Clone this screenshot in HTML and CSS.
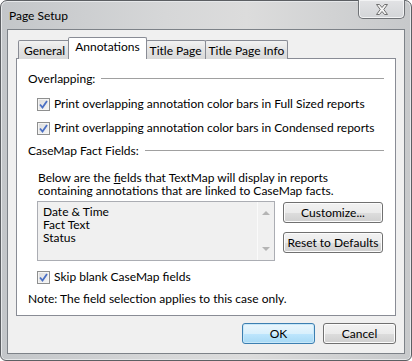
FILE: index.html
```html
<!DOCTYPE html>
<html lang="en">
<head>
  <meta charset="UTF-8" />
  <title>Page Setup</title>
  <link rel="stylesheet" href="styles.css">
</head>
<body>

  <div class="window">
    <div class="titlebar">
      <span class="title">Page Setup</span>
      <button class="close-btn" aria-label="Close">
        <svg width="14" height="11" viewBox="0 0 14 11">
          <path d="M1.5 0.5 H4.5 L7 3.5 L9.5 0.5 H12.5 L8.8 5.5 L12.5 10.5 H9.5 L7 7.5 L4.5 10.5 H1.5 L5.2 5.5 Z"
                fill="#f4f4f4" stroke="#707070" stroke-width="1" stroke-linejoin="round"/>
        </svg>
      </button>
    </div>

    <div class="client">
      <div class="tabs">
        <div class="tab">General</div>
        <div class="tab active">Annotations</div>
        <div class="tab">Title Page</div>
        <div class="tab">Title Page Info</div>
      </div>

      <div class="panel">
        <div class="group-head"><span>Overlapping:</span></div>

        <label class="check row-cb1">
          <span class="box"><svg width="9" height="9" viewBox="0 0 9 9"><path d="M1 4.5 L3.5 7.5 L8 1" fill="none" stroke="#4a6fc4" stroke-width="1.8"/></svg></span>
          Print overlapping annotation color bars in Full Sized reports
        </label>
        <label class="check row-cb2">
          <span class="box"><svg width="9" height="9" viewBox="0 0 9 9"><path d="M1 4.5 L3.5 7.5 L8 1" fill="none" stroke="#4a6fc4" stroke-width="1.8"/></svg></span>
          Print overlapping annotation color bars in Condensed reports
        </label>

        <div class="group-head row-head2"><span>CaseMap Fact Fields:</span></div>

        <p class="desc">Below are the <u>f</u>ields that TextMap will display in reports<br>containing annotations that are linked to CaseMap facts.</p>

        <div class="fields">
          <div class="listbox">
            <div class="items">
              <div>Date &amp; Time</div>
              <div>Fact Text</div>
              <div>Status</div>
            </div>
            <div class="scroll">
              <span class="arrow up"></span>
              <span class="arrow down"></span>
            </div>
          </div>
          <div class="side-buttons">
            <button class="btn">Customize...</button>
            <button class="btn">Reset to Defaults</button>
          </div>
        </div>

        <label class="check row-skip">
          <span class="box"><svg width="9" height="9" viewBox="0 0 9 9"><path d="M1 4.5 L3.5 7.5 L8 1" fill="none" stroke="#4a6fc4" stroke-width="1.8"/></svg></span>
          Skip blank CaseMap fields
        </label>

        <p class="note">Note: The field selection applies to this case only.</p>
      </div>

      <div class="footer">
        <button class="btn default">OK</button>
        <button class="btn">Cancel</button>
      </div>
    </div>
  </div>

</body>
</html>
```

FILE: styles.css
```css
* { box-sizing: border-box; }
body {
  margin: 0;
  font-family: Lato, "Liberation Sans", sans-serif;
  font-size: 12px;
  color: #000;
  background: #fff;
}

.window {
  width: 412px;
  height: 361px;
  border: 1px solid #5c5f63;
  border-radius: 7px 7px 6px 6px;
  background: linear-gradient(to right, #c3c6c9, #d6d7d8 40%, #dcdcdc 60%, #c7c9cb);
  display: flex;
  flex-direction: column;
  box-shadow: inset 0 0 0 1px #e6e8ea;
}

.titlebar {
  height: 28px;
  display: flex;
  align-items: flex-start;
  padding-left: 8px;
}

.title {
  line-height: 29px;
  font-size: 12px;
  color: #000;
}

.close-btn {
  margin-left: auto;
  margin-right: 6px;
  width: 47px;
  height: 19px;
  margin-top: -1px;
  border: 1px solid #6f7276;
  border-top: none;
  border-radius: 0 0 5px 5px;
  background: linear-gradient(#e2e3e5, #d3d5d8);
  box-shadow: inset 0 0 0 1px #f2f3f4;
  display: flex;
  align-items: center;
  justify-content: center;
  padding: 0;
}

.client {
  flex: 1;
  margin: 0 6px 6px 6px;
  border: 1px solid #7d8288;
  background: #f0f0f0;
  padding: 7px 8px 0 8px;
  display: flex;
  flex-direction: column;
}

/* Tabs */
.tabs {
  display: flex;
  align-items: flex-end;
  padding-left: 2px;
  height: 22px;
  position: relative;
  z-index: 1;
  margin-bottom: -1px;
  white-space: nowrap;
}

.tab {
  height: 19px;
  line-height: 19px;
  padding: 0 3px;
  border: 1px solid #898c95;
  border-bottom: none;
  margin-right: -1px;
  background: linear-gradient(#f2f2f2, #e3e3e3 50%, #d9d9d9);
  border-radius: 2px 2px 0 0;
}

.tab:first-child { padding: 0 5px; }

.tab.active {
  height: 22px;
  line-height: 18px;
  background: #fff;
  padding: 0 6px;
  margin: 0 -1px 0 -2px;
  position: relative;
  z-index: 2;
}

.panel {
  height: 258px;
  border: 1px solid #898c95;
  background: #fff;
  padding: 0 11px 0 11px;
  white-space: nowrap;
}

.group-head {
  display: flex;
  align-items: center;
  height: 16px;
  line-height: 16px;
  margin-top: 12px;
}

.group-head::after {
  content: "";
  flex: 1;
  height: 0;
  border-top: 1px solid #a0a0a0;
  margin-left: 6px;
  margin-top: -1px;
}

.row-head2 { margin-top: 7px; }

.check {
  display: flex;
  align-items: center;
  height: 16px;
  line-height: 16px;
  margin-left: 9px;
}

.row-cb1 { margin-top: 9px; }
.row-cb2 { margin-top: 8px; }
.row-skip { margin-top: 8px; }

.box {
  width: 13px;
  height: 13px;
  border: 1px solid #8e8f8f;
  background: linear-gradient(135deg, #dcdcdc, #f6f6f6);
  box-shadow: inset 0 0 0 1px #f4f4f4;
  margin-right: 4px;
  display: flex;
  align-items: center;
  justify-content: center;
}

.desc {
  margin: 12px 0 0 10px;
  line-height: 13px;
}

.fields {
  display: flex;
  margin: 4px 0 0 9px;
  gap: 8px;
}

.listbox {
  width: 238px;
  height: 60px;
  border: 1px solid #abadb3;
  background: #f0f0f0;
  display: flex;
}

.items {
  flex: 1;
  padding: 3px 5px;
  line-height: 13px;
}

.scroll {
  width: 17px;
  border-left: 1px solid #fafafa;
  background: #f0f0f0;
  display: flex;
  flex-direction: column;
  justify-content: space-between;
  align-items: center;
  padding: 9px 0 9px;
}

.arrow {
  width: 0;
  height: 0;
  border-left: 4px solid transparent;
  border-right: 4px solid transparent;
}

.arrow.up { border-bottom: 4px solid #b4b4b4; }
.arrow.down { border-top: 4px solid #b4b4b4; }

.side-buttons {
  display: flex;
  flex-direction: column;
  gap: 9px;
  padding-top: 1px;
}

.btn {
  font-family: inherit;
  font-size: 12px;
  color: #000;
  height: 21px;
  padding: 0;
  border: 1px solid #707070;
  border-radius: 3px;
  background: linear-gradient(#f2f2f2, #ebebeb 50%, #dddddd 51%, #cfcfcf);
  box-shadow: inset 0 0 0 1px #fcfcfc;
}

.side-buttons .btn { width: 100px; }

.note {
  margin: 6px 0 0 0;
  height: 16px;
  line-height: 16px;
}

.footer {
  display: flex;
  justify-content: flex-end;
  gap: 8px;
  margin-top: 7px;
}

.footer .btn { width: 73px; }

.btn.default {
  border-color: #3c7fb1;
  background: linear-gradient(#eaf6fd, #d9f0fc 50%, #bee6fd 51%, #a7d9f5);
  box-shadow: inset 0 0 0 1px #c8e8f9;
}
```
